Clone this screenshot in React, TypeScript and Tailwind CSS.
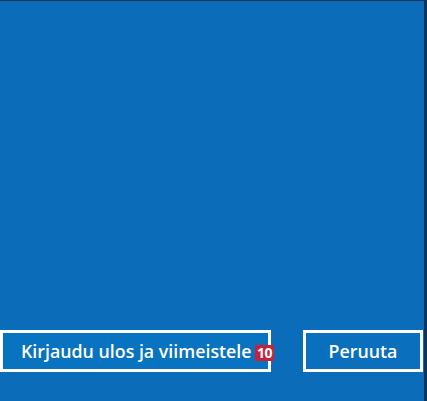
export default function App() {
  return (
    <div
      className="flex h-[401px] w-[427px] flex-col justify-end border-t border-r-[3px] border-[#0f3459] bg-[#0b6dba] pb-[29px] text-white"
      style={{ fontFamily: '"Open Sans", "Noto Sans", sans-serif' }}
    >
      <div className="flex items-center gap-[32px]">
        <button className="relative flex h-[42px] w-[271px] items-center border-[3px] border-white bg-[#0873c0] pl-[18px] text-[17.8px] font-semibold">
          Kirjaudu ulos ja viimeistele
          <span className="absolute left-[252px] top-[12px] flex h-[16px] w-[19px] items-center justify-center bg-[#c8213a] text-[14px] font-bold leading-none tracking-[-0.5px]">
            10
          </span>
        </button>
        <button className="flex h-[42px] w-[120px] items-center justify-center border-[3px] border-white bg-[#0a6fbc] text-[17.8px] font-semibold">
          Peruuta
        </button>
      </div>
    </div>
  );
}
